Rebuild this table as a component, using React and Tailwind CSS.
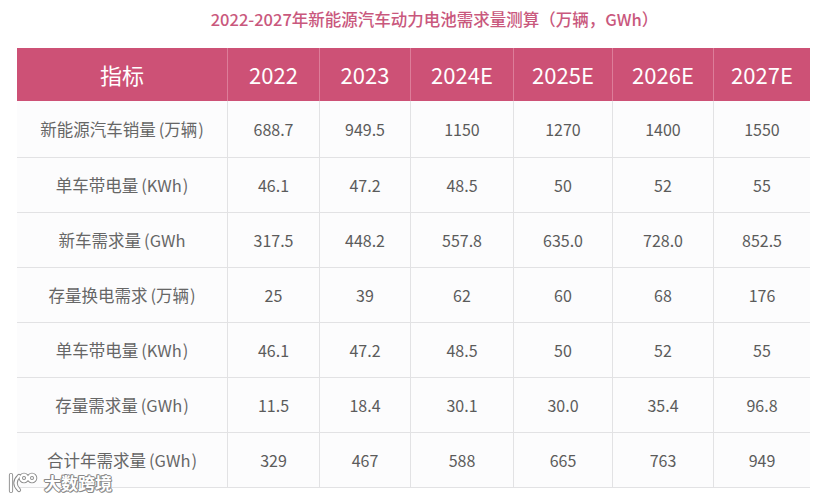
import React from "react"

const years = ["2022", "2023", "2024E", "2025E", "2026E", "2027E"]

// 指标名拆成 [主体, 括号内单位, 是否闭合]
const rows = [
  [["新能源汽车销量", "万辆", true], "688.7", "949.5", "1150", "1270", "1400", "1550"],
  [["单车带电量", "KWh", true], "46.1", "47.2", "48.5", "50", "52", "55"],
  [["新车需求量", "GWh", false], "317.5", "448.2", "557.8", "635.0", "728.0", "852.5"],
  [["存量换电需求", "万辆", true], "25", "39", "62", "60", "68", "176"],
  [["单车带电量", "KWh", true], "46.1", "47.2", "48.5", "50", "52", "55"],
  [["存量需求量", "GWh", true], "11.5", "18.4", "30.1", "30.0", "35.4", "96.8"],
  [["合计年需求量", "GWh", true], "329", "467", "588", "665", "763", "949"],
]

const cols = "grid grid-cols-[210px_92px_91px_103px_99px_101px_97px]"

function Label({ name, unit, closed }) {
  return (
    <span className="text-[16.5px] text-[#666]">
      {name}
      <span className="ml-[3px]">(</span>
      {unit}
      {closed && <span className="ml-[1px]">)</span>}
    </span>
  )
}

export default function App() {
  return (
    <div
      className="relative w-[831px] h-[498px] bg-white overflow-hidden"
      style={{ fontFamily: '"Noto Sans CJK SC", "Noto Sans", sans-serif' }}
    >
      <div className="h-[38px] pl-[38px] flex items-center justify-center text-[16.5px] font-medium text-[#c9587d]">
        2022-2027年新能源汽车动力电池需求量测算（万辆，GWh）
      </div>

      <div className="ml-[17px] mt-[10px] w-[793px]">
        <div className={`${cols} h-[53px] bg-[#cd5176] text-white text-[22px]`}>
          {["指标", ...years].map((h, i) => (
            <div
              key={h}
              className={`flex items-center justify-center ${i > 0 ? "border-l border-[#dd7d99]" : ""}`}
            >
              {h}
            </div>
          ))}
        </div>

        {rows.map((r, ri) => (
          <div
            key={ri}
            className={`${cols} ${ri === 0 ? "h-[57px]" : "h-[55px]"} bg-[#fcfcfd] border-b border-[#e2e2e4] text-[#5b5b5b]`}
          >
            {r.map((c, ci) => (
              <div
                key={ci}
                className={`flex items-center justify-center ${ci === 0 ? "" : "text-[16px] border-l border-[#e2e2e4]"}`}
              >
                {ci === 0 ? <Label name={c[0]} unit={c[1]} closed={c[2]} /> : c}
              </div>
            ))}
          </div>
        ))}
      </div>

      {/* 水印 */}
      <div className="absolute left-[7px] top-[470px] flex items-center gap-[3px]">
        <svg width="34" height="22" viewBox="0 0 34 22" fill="none" strokeLinecap="round">
          <g stroke="#8a8a8a" strokeWidth="4.2">
            <path d="M4 3 V19" />
            <path d="M12 4 Q5 11 12 18" />
            <circle cx="17" cy="6" r="3.2" />
            <circle cx="25" cy="6" r="3.2" />
          </g>
          <g stroke="#fff" strokeWidth="2.4">
            <path d="M4 3 V19" />
            <path d="M12 4 Q5 11 12 18" />
            <circle cx="17" cy="6" r="3.2" />
            <circle cx="25" cy="6" r="3.2" />
          </g>
        </svg>
        <span
          className="text-[17px] text-white font-bold"
          style={{
            textShadow:
              "1px 0 0 #888, -1px 0 0 #888, 0 1px 0 #888, 0 -1px 0 #888, 1px 1px 0 #999, -1px -1px 0 #999",
          }}
        >
          大数跨境
        </span>
      </div>
    </div>
  )
}
